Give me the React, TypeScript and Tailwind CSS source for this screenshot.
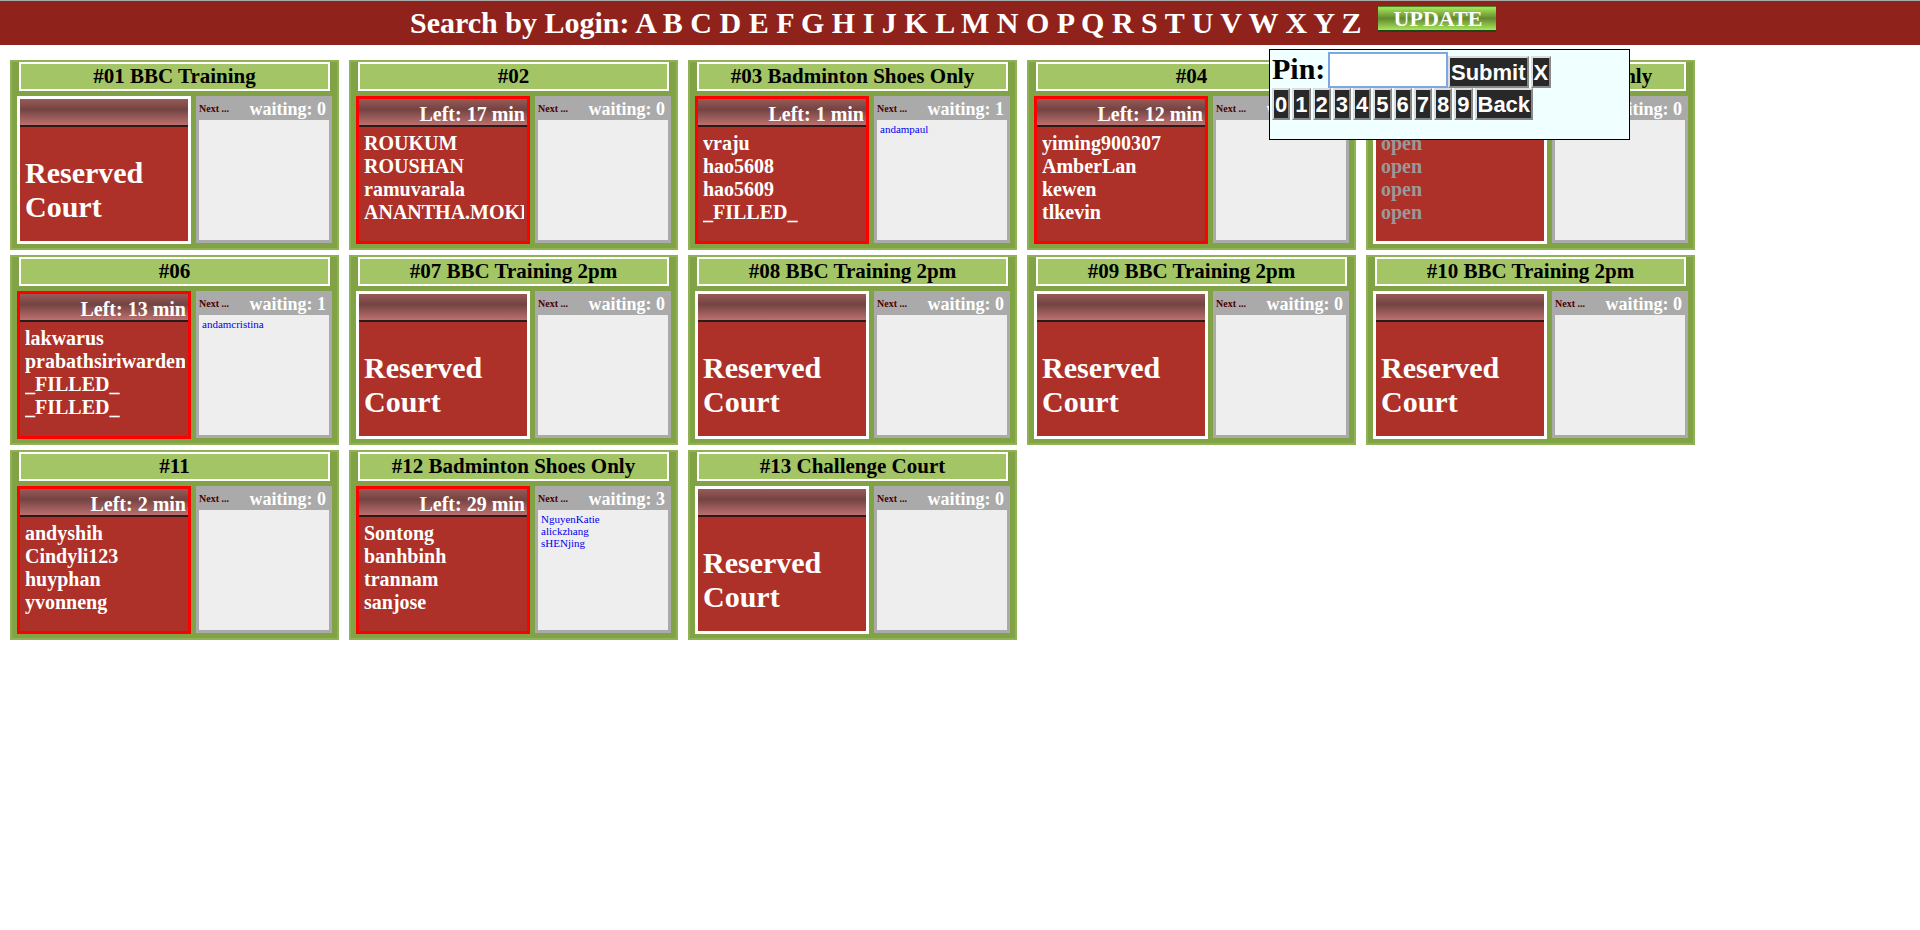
import React from 'react';

type Court = {
  title: string;
  left?: string;
  players?: string[];
  open?: boolean;
  waiting?: string[];
};

const courts: Court[] = [
  { title: '#01 BBC Training' },
  { title: '#02', left: 'Left: 17 min', players: ['ROUKUM', 'ROUSHAN', 'ramuvarala', 'ANANTHA.MOKKA'] },
  { title: '#03 Badminton Shoes Only', left: 'Left: 1 min', players: ['vraju', 'hao5608', 'hao5609', '_FILLED_'], waiting: ['andampaul'] },
  { title: '#04', left: 'Left: 12 min', players: ['yiming900307', 'AmberLan', 'kewen', 'tlkevin'] },
  { title: '#05 Badminton Shoes Only', players: ['open', 'open', 'open', 'open'], open: true },
  { title: '#06', left: 'Left: 13 min', players: ['lakwarus', 'prabathsiriwarden', '_FILLED_', '_FILLED_'], waiting: ['andamcristina'] },
  { title: '#07 BBC Training 2pm' },
  { title: '#08 BBC Training 2pm' },
  { title: '#09 BBC Training 2pm' },
  { title: '#10 BBC Training 2pm' },
  { title: '#11', left: 'Left: 2 min', players: ['andyshih', 'Cindyli123', 'huyphan', 'yvonneng'] },
  { title: '#12 Badminton Shoes Only', left: 'Left: 29 min', players: ['Sontong', 'banhbinh', 'trannam', 'sanjose'], waiting: ['NguyenKatie', 'alickzhang', 'sHENjing'] },
  { title: '#13 Challenge Court' },
];

const letters = 'ABCDEFGHIJKLMNOPQRSTUVWXYZ'.split('');
const digits = '0123456789'.split('');

function CourtCard({ court }: { court: Court }) {
  const waiting = court.waiting ?? [];
  return (
    <section className="flex h-[190px] w-[329px] flex-col border-2 border-[#8fb255] bg-[#82a345]">
      <h2 className="mx-[7px] h-[29px] border-2 border-white bg-[#a3c565] text-center text-[21px] leading-[25px] font-bold text-black">
        {court.title}
      </h2>
      <div className="mt-[5px] flex items-start gap-[5px] pl-[5px]">
        <div className={`h-[148px] w-[174px] overflow-hidden border-[3px] bg-[#ad3128] text-white ${court.left ? 'border-[#ff0000]' : 'border-white'}`}>
          <div className="h-[28px] border-b-2 border-[#2a1a1a] bg-linear-to-b from-[#985a58] via-[#744442] via-40% to-[#bc706e] pr-[2px] text-right text-[20px] leading-[30px] font-bold">
            {court.left}
          </div>
          {court.players ? (
            <ul className={`ml-[5px] mr-[3px] mt-[5px] overflow-hidden text-[20px] leading-[23px] font-bold whitespace-nowrap ${court.open ? 'text-[#999999]' : 'text-white'}`}>
              {court.players.map((p, i) => (
                <li key={i}>{p}</li>
              ))}
            </ul>
          ) : (
            <p className="mt-[29px] pl-[5px] text-[30px] leading-[34px] font-bold">Reserved Court</p>
          )}
        </div>
        <div className="h-[147px] w-[136px] border-[3px] border-[#aaaaaa] bg-[#eeeeee]">
          <div className="flex h-[21px] items-start justify-between bg-[#aaaaaa] pr-[3px] font-bold">
            <span className="text-[10px] leading-[19px] text-[#4d0000]">Next ...</span>
            <span className="text-[18px] leading-[20px] text-white">waiting: {waiting.length}</span>
          </div>
          <ul className="pt-[3px] pl-[3px] text-[11px] leading-[12px]">
            {waiting.map((w) => (
              <li key={w}>
                <a href="#" className="text-[#0000ee]">{w}</a>
              </li>
            ))}
          </ul>
        </div>
      </div>
    </section>
  );
}

function Key({ children }: { children: React.ReactNode }) {
  return (
    <button
      type="button"
      className="h-[32px] border-2 border-t-[#dddddd] border-r-[#888888] border-b-[#888888] border-l-[#dddddd] bg-[#282828] px-px font-['Liberation_Sans',Arial,sans-serif] text-[22px] leading-[25px] font-bold text-white"
    >
      {children}
    </button>
  );
}

export default function App() {
  return (
    <div className="min-h-screen bg-white font-['Liberation_Serif','Times_New_Roman',serif]">
      <header className="relative border-t border-[#aaaaaa] bg-[#8f231b]">
        <nav className="flex h-[44px] items-start justify-center pr-[14px] font-bold text-white">
          <p className="pt-[5px] text-[30px] leading-[34px] whitespace-pre">
            Search by Login:{' '}
            {letters.map((l) => (
              <React.Fragment key={l}>
                <a href="#">{l}</a>{' '}
              </React.Fragment>
            ))}
          </p>
          <button
            type="button"
            className="mt-[5px] ml-[9px] h-[26px] w-[118px] border-t border-b-2 border-t-[#4a8020] border-b-[#22431a] bg-linear-to-b from-[#a0e055] from-5% via-[#648a30] via-50% to-[#a8e85a] pl-[2px] text-[22px] leading-[22px]"
          >
            UPDATE
          </button>
        </nav>
        <form
          className="absolute top-[48px] left-[1269px] h-[91px] w-[361px] border border-black bg-[#f0ffff] pt-[2px] pl-[2px]"
          onSubmit={(e) => e.preventDefault()}
        >
          <div className="flex items-end">
            <label htmlFor="pin" className="w-[56px] pb-[2px] text-[30px] leading-[34px] font-bold text-black">
              Pin:
            </label>
            <input
              id="pin"
              type="password"
              className="h-[36px] w-[120px] border-2 border-[#7ba7e4] bg-white px-1 text-[26px] outline-none"
            />
            <div className="flex gap-[2px]">
              <Key>Submit</Key>
              <Key>X</Key>
            </div>
          </div>
          <div className="flex gap-[2px]">
            {digits.map((d) => (
              <Key key={d}>{d}</Key>
            ))}
            <Key>Back</Key>
          </div>
        </form>
      </header>
      <main className="flex flex-wrap gap-x-[10px] gap-y-[5px] pt-[15px] pr-[200px] pl-[10px]">
        {courts.map((c) => (
          <CourtCard key={c.title} court={c} />
        ))}
      </main>
    </div>
  );
}
